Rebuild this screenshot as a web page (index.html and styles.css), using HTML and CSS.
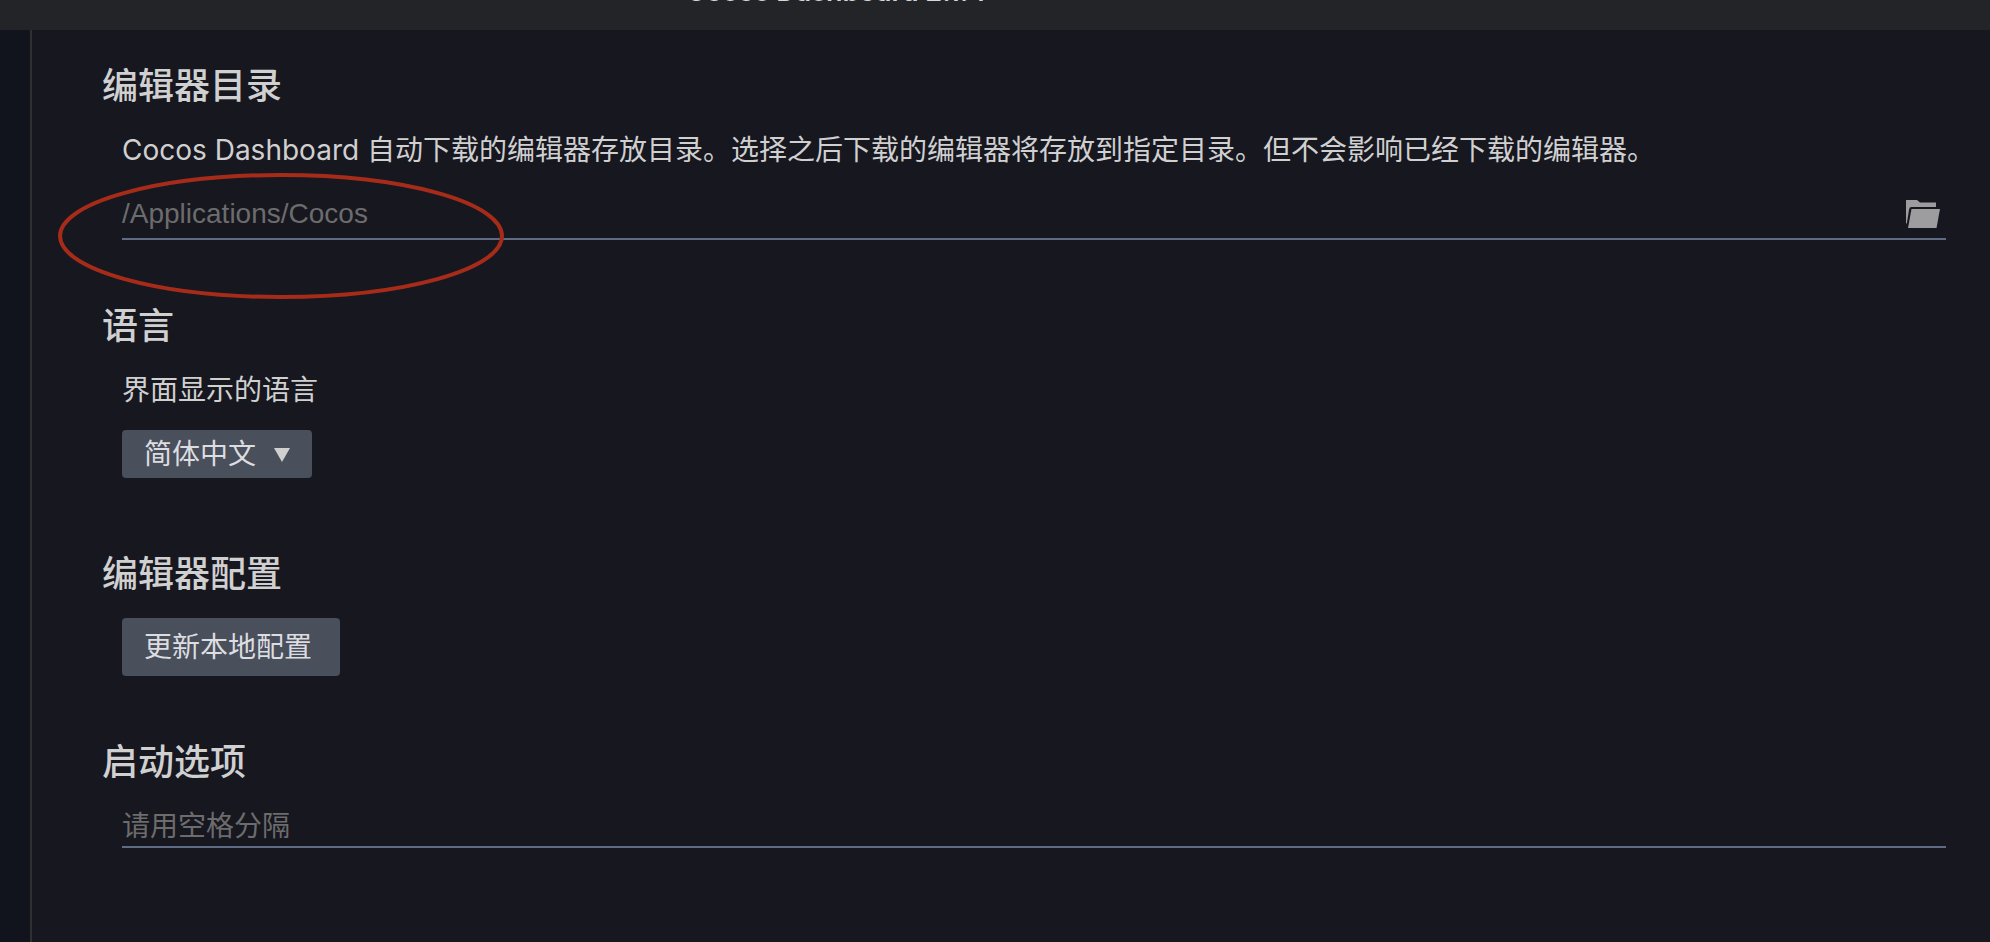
FILE: index.html
```html
<!DOCTYPE html>
<html lang="zh-CN">
<head>
    <meta charset="UTF-8">
    <meta name="viewport" content="width=device-width, initial-scale=1.0">
    <title>Cocos Dashboard</title>
    <link rel="stylesheet" href="styles.css">
</head>
<body>
    <header class="titlebar">
        <h1>Cocos Dashboard 2.1.4</h1>
    </header>
    <div class="layout">
        <aside class="sidebar"></aside>
        <main class="settings">
            <section class="section">
                <h2>编辑器目录</h2>
                <div class="content">
                    <label for="editorPath">Cocos Dashboard 自动下载的编辑器存放目录。选择之后下载的编辑器将存放到指定目录。但不会影响已经下载的编辑器。</label>
                    <div class="path-row">
                        <input type="text" id="editorPath" placeholder="/Applications/Cocos">
                        <button type="button" class="folder-button" aria-label="选择目录">
                            <svg width="34" height="28" viewBox="0 0 34 28" fill="#9d9da0">
                                <path d="M0 0H11L14 2.500H30V7H5.500Q3.500 7 3.200 9L.8 23.500H0Z"/>
                                <path d="M5.500 9H34L30.500 28H2Z"/>
                            </svg>
                        </button>
                        <svg class="mark" width="448" height="128" viewBox="0 0 448 128">
                            <ellipse cx="223" cy="64" rx="221" ry="61" fill="none" stroke="#a62c19" stroke-width="4"/>
                        </svg>
                    </div>
                </div>
            </section>

            <section class="section">
                <h2>语言</h2>
                <div class="content">
                    <label for="language">界面显示的语言</label>
                    <div class="select-box">
                        <select id="language">
                            <option>简体中文</option>
                            <option>English</option>
                        </select>
                    </div>
                </div>
            </section>

            <section class="section">
                <h2>编辑器配置</h2>
                <div class="content">
                    <button type="button" class="update-button">更新本地配置</button>
                </div>
            </section>

            <section class="section">
                <h2><label for="launchOptions">启动选项</label></h2>
                <div class="content">
                    <input type="text" id="launchOptions" class="launch-input" placeholder="请用空格分隔">
                </div>
            </section>
        </main>
    </div>
</body>
</html>
```

FILE: styles.css
```css
* {
    box-sizing: border-box;
}
body {
    display: flex;
    flex-direction: column;
    min-height: 100vh;
    margin: 0;
    background: #171720;
    color: #d0d0d0;
    font-family: Inter, "Noto Sans CJK SC", sans-serif;
    font-size: 28px;
    line-height: 40px;
}
.titlebar {
    display: flex;
    align-items: flex-start;
    height: 30px;
    padding-left: 686px;
    overflow: hidden;
    background: #232428;
}
.titlebar h1 {
    margin: -28px 0 0;
    font-size: 27px;
    font-weight: 600;
    color: #d5d7da;
}
.layout {
    display: flex;
    flex: 1;
}
.sidebar {
    width: 32px;
    background: #11141c;
    border-right: 2px solid #303030;
}
.settings {
    flex: 1;
    padding: 36px 44px 0 70px;
}
.section {
    margin-bottom: 66px;
}
.section h2 {
    margin: 0 0 24px;
    font-size: 36px;
    font-weight: 500;
}
.content {
    padding-left: 20px;
}
.content label {
    display: block;
    margin-bottom: 20px;
}
input,
select,
button {
    font: inherit;
}
input {
    display: block;
    width: 100%;
    padding: 0;
    border: none;
    border-bottom: 2px solid #5f6c84;
    border-radius: 0;
    outline: none;
    background: transparent;
    color: #d0d0d0;
}
input::placeholder {
    color: #6c6c6c;
    opacity: 1;
}
.path-row {
    display: flex;
    position: relative;
}
.path-row input {
    height: 50px;
    font-family: "Liberation Sans", "Noto Sans CJK SC", sans-serif;
}
.folder-button {
    position: absolute;
    top: 10px;
    right: 6px;
    padding: 0;
    border: none;
    background: none;
    line-height: 0;
    cursor: pointer;
}
.mark {
    position: absolute;
    top: -18px;
    left: -64px;
    pointer-events: none;
}
.launch-input {
    height: 42px;
}
.select-box {
    position: relative;
    width: 190px;
    margin-bottom: 76px;
}
.select-box select {
    display: block;
    width: 100%;
    height: 48px;
    padding: 0 22px;
    border: none;
    border-radius: 4px;
    appearance: none;
    background: #4a4f5c;
    color: #dcdde0;
}
.select-box::after {
    content: "";
    position: absolute;
    top: 18px;
    right: 22px;
    border: 8px solid transparent;
    border-top: 14px solid #d0d0d0;
    border-bottom: none;
    pointer-events: none;
}
.update-button {
    display: block;
    height: 58px;
    padding: 0 28px 0 22px;
    border: none;
    border-radius: 4px;
    background: #4a4f5c;
    color: #dcdde0;
    cursor: pointer;
}
```
